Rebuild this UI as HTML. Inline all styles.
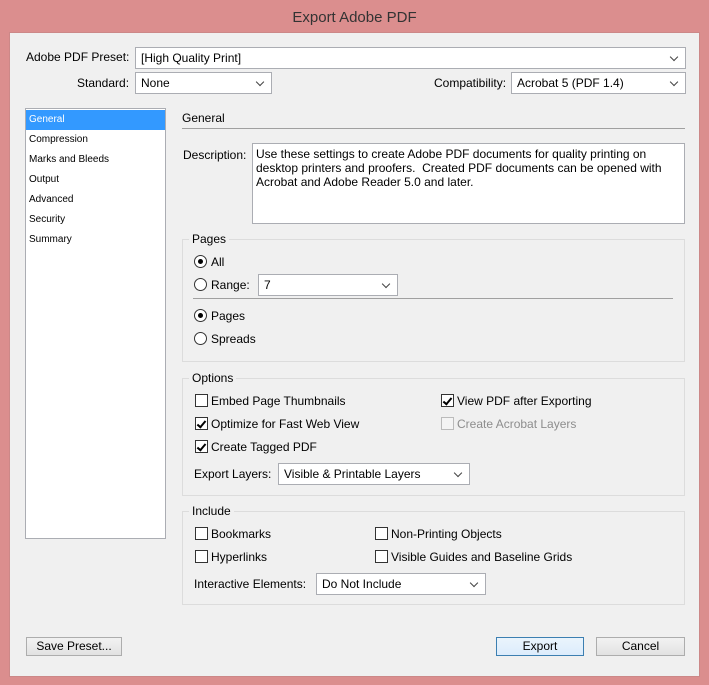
<!DOCTYPE html>
<html><head><style>
*{box-sizing:border-box;margin:0;padding:0}
body{width:709px;height:685px;background:#db8e8e;position:relative;overflow:hidden;font-family:"Liberation Sans",sans-serif;font-size:12px;color:#000}
.a{position:absolute}
.title{left:0;top:9px;width:709px;text-align:center;font-size:15px;color:#333}
.client{left:9px;top:32px;width:691px;height:645px;background:#f0f0f0;border:1px solid #c88}
.sel{background:#fff;border:1px solid #abadb3;height:22px;padding:3px 5px;font-size:12px}
.sel:after{content:"";position:absolute;right:8px;top:6px;width:5px;height:5px;border-right:1.5px solid #444;border-bottom:1.5px solid #444;transform:rotate(45deg)}
.grp{border:1px solid #dcdcdc}
.gl{background:#f0f0f0;padding:0 3px;font-size:12px}
.cb{width:13px;height:13px;border:1px solid #333;background:#fff}
.cb.on:after{content:"";position:absolute;left:3px;top:1px;width:3px;height:7px;border-right:2px solid #000;border-bottom:2px solid #000;transform:rotate(40deg)}
.cb.dis{border-color:#bbb;background:#f4f4f4}
.rb{width:13px;height:13px;border:1px solid #333;border-radius:50%;background:#fff}
.rb.on:after{content:"";position:absolute;left:3px;top:3px;width:5px;height:5px;border-radius:50%;background:#000}
.btn{border:1px solid #adadad;background:linear-gradient(#f2f2f2,#e2e2e2);text-align:center;line-height:17px;height:19px}
.nav div{height:20px;line-height:20px;padding-left:3px;font-size:10px}
</style></head><body>
<div class="a title">Export Adobe PDF</div>
<div class="a client"></div>
<div class="a" style="left:26px;top:50px">Adobe PDF Preset:</div>
<div class="a sel" style="left:135px;top:47px;width:551px">[High Quality Print]</div>
<div class="a" style="left:77px;top:76px">Standard:</div>
<div class="a sel" style="left:135px;top:72px;width:137px">None</div>
<div class="a" style="left:434px;top:76px">Compatibility:</div>
<div class="a sel" style="left:511px;top:72px;width:175px">Acrobat 5 (PDF 1.4)</div>

<div class="a nav" style="left:25px;top:108px;width:141px;height:431px;background:#fff;border:1px solid #abadb3;padding-top:1px">
<div style="background:#3399ff;color:#fff">General</div><div>Compression</div><div>Marks and Bleeds</div><div>Output</div><div>Advanced</div><div>Security</div><div>Summary</div></div>

<div class="a" style="left:182px;top:111px">General</div>
<div class="a" style="left:182px;top:128px;width:503px;border-top:1px solid #a0a0a0"></div>
<div class="a" style="left:183px;top:148px">Description:</div>
<div class="a" style="left:252px;top:143px;width:433px;height:81px;background:#fff;border:1px solid #abadb3;padding:3px 3px;line-height:14px;font-size:12px">Use these settings to create Adobe PDF documents for quality printing on desktop printers and proofers.&nbsp; Created PDF documents can be opened with Acrobat and Adobe Reader 5.0 and later.</div>

<div class="a grp" style="left:182px;top:239px;width:503px;height:123px"></div>
<div class="a gl" style="left:189px;top:232px">Pages</div>
<div class="a rb on" style="left:194px;top:255px"></div><div class="a" style="left:211px;top:255px">All</div>
<div class="a rb" style="left:194px;top:278px"></div><div class="a" style="left:211px;top:278px">Range:</div>
<div class="a sel" style="left:258px;top:274px;width:140px">7</div>
<div class="a" style="left:193px;top:298px;width:480px;border-top:1px solid #a0a0a0"></div>
<div class="a rb on" style="left:194px;top:309px"></div><div class="a" style="left:211px;top:309px">Pages</div>
<div class="a rb" style="left:194px;top:332px"></div><div class="a" style="left:211px;top:332px">Spreads</div>

<div class="a grp" style="left:182px;top:378px;width:503px;height:118px"></div>
<div class="a gl" style="left:189px;top:371px">Options</div>
<div class="a cb" style="left:195px;top:394px"></div><div class="a" style="left:211px;top:394px">Embed Page Thumbnails</div>
<div class="a cb on" style="left:195px;top:417px"></div><div class="a" style="left:211px;top:417px">Optimize for Fast Web View</div>
<div class="a cb on" style="left:195px;top:440px"></div><div class="a" style="left:211px;top:440px">Create Tagged PDF</div>
<div class="a cb on" style="left:441px;top:394px"></div><div class="a" style="left:457px;top:394px">View PDF after Exporting</div>
<div class="a cb dis" style="left:441px;top:417px"></div><div class="a" style="left:457px;top:417px;color:#8d8d8d">Create Acrobat Layers</div>
<div class="a" style="left:194px;top:467px">Export Layers:</div>
<div class="a sel" style="left:278px;top:463px;width:192px">Visible &amp; Printable Layers</div>

<div class="a grp" style="left:182px;top:511px;width:503px;height:94px"></div>
<div class="a gl" style="left:189px;top:504px">Include</div>
<div class="a cb" style="left:195px;top:527px"></div><div class="a" style="left:211px;top:527px">Bookmarks</div>
<div class="a cb" style="left:195px;top:550px"></div><div class="a" style="left:211px;top:550px">Hyperlinks</div>
<div class="a cb" style="left:375px;top:527px"></div><div class="a" style="left:391px;top:527px">Non-Printing Objects</div>
<div class="a cb" style="left:375px;top:550px"></div><div class="a" style="left:391px;top:550px">Visible Guides and Baseline Grids</div>
<div class="a" style="left:194px;top:577px">Interactive Elements:</div>
<div class="a sel" style="left:316px;top:573px;width:170px">Do Not Include</div>

<div class="a btn" style="left:26px;top:637px;width:96px">Save Preset...</div>
<div class="a btn" style="left:496px;top:637px;width:88px;border-color:#3c7fb1;background:linear-gradient(#eaf4fc,#dcecfc)">Export</div>
<div class="a btn" style="left:596px;top:637px;width:89px">Cancel</div>
</body></html>
